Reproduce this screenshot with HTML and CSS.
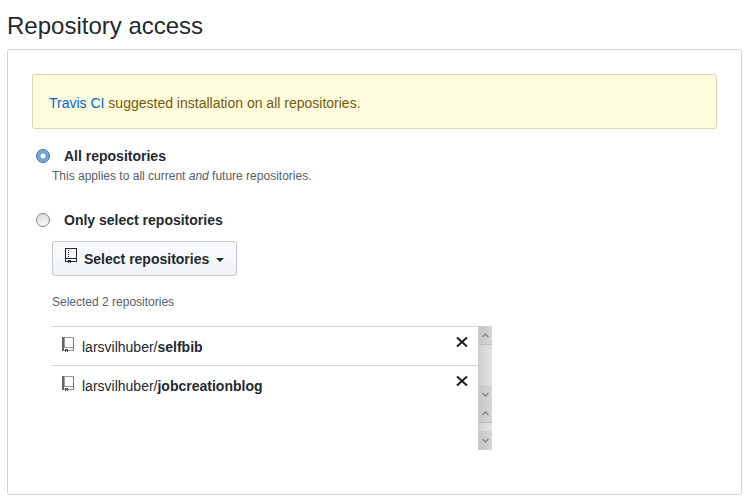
FILE: index.html
```
<!DOCTYPE html>
<html lang="en">
<head>
<meta charset="utf-8">
<title>Repository access</title>
<link rel="stylesheet" href="styles.css">
</head>
<body>
<svg class="defs" aria-hidden="true">
  <symbol id="repo" viewBox="0 0 12 16" shape-rendering="crispEdges">
    <path fill="currentColor" d="M0 0h12v1H0zM0 1h1v13H0zM11 1h1v13h-1zM1 10h10v1H1zM1 13h2v1H1zM6 13h5v1H6z"/>
    <path fill="currentColor" d="M3 2h1v1H3zM3 4h1v1H3zM3 6h1v1H3zM3 8h1v1H3zM3 12h3v2H3zM3 14h1v1H3zM5 14h1v1H5z"/>
  </symbol>
  <symbol id="book" viewBox="0 0 12 16" shape-rendering="crispEdges">
    <path fill="#666" d="M0 0h2v14H0z"/>
    <path fill="#999" d="M2 0h10v1H2zM2 1h1v10H2zM2 10h9v1H2zM6 13h6v1H6zM2 13h1v1H2z"/>
    <path fill="#777" d="M11 1h1v13h-1z"/>
    <path fill="#555" d="M3 12h3v2H3zM3 14h1v1H3zM5 14h1v1H5z"/>
  </symbol>
  <symbol id="cross" viewBox="0 0 12 12">
    <path fill="none" stroke="currentColor" stroke-width="2" d="M1 1.500l10 9M11 1.500l-10 9"/>
  </symbol>
  <symbol id="up" viewBox="0 0 7 5">
    <path fill="none" stroke="#888" stroke-width="1.500" d="M.5 4l3-3 3 3"/>
  </symbol>
  <symbol id="down" viewBox="0 0 7 5">
    <path fill="none" stroke="#888" stroke-width="1.500" d="M.5 1l3 3 3-3"/>
  </symbol>
</svg>
<main>
  <h1>Repository access</h1>
  <form class="panel">
    <p class="notice"><a href="#">Travis CI</a> suggested installation on all repositories.</p>
    <div class="choice">
      <input type="radio" name="access" id="all" checked>
      <label for="all">All repositories</label>
    </div>
    <p class="note">This applies to all current <em>and</em> future repositories.</p>
    <div class="choice">
      <input type="radio" name="access" id="selected">
      <label for="selected">Only select repositories</label>
    </div>
    <div class="selection">
      <button type="button" class="picker"><svg class="icon" aria-hidden="true"><use href="#repo"/></svg><span>Select repositories</span><i class="caret"></i></button>
      <p class="count">Selected 2 repositories</p>
      <div class="viewport">
        <ul class="repos">
          <li><svg class="icon" aria-hidden="true"><use href="#book"/></svg><span>larsvilhuber/<b>selfbib</b></span><button type="button" class="remove" aria-label="Remove selfbib"><svg aria-hidden="true"><use href="#cross"/></svg></button></li>
          <li><svg class="icon" aria-hidden="true"><use href="#book"/></svg><span>larsvilhuber/<b>jobcreationblog</b></span><button type="button" class="remove" aria-label="Remove jobcreationblog"><svg aria-hidden="true"><use href="#cross"/></svg></button></li>
        </ul>
        <div class="bars" aria-hidden="true">
          <div class="bar tall"><span><svg><use href="#up"/></svg></span><span><svg><use href="#down"/></svg></span></div>
          <div class="bar"><span><svg><use href="#up"/></svg></span><span><svg><use href="#down"/></svg></span></div>
        </div>
      </div>
    </div>
  </form>
</main>
</body>
</html>
```
FILE: styles.css
```
* { box-sizing: border-box; }
body {
  margin: 0;
  background: #fff;
  color: #24292e;
  font: 14px/20px "Liberation Sans", Arial, sans-serif;
}
.defs { position: absolute; width: 0; height: 0; }
main { padding: 8px 4px 8px 7px; }
h1 { margin: 0 0 5px; font-size: 24px; line-height: 36px; font-weight: 400; }
.panel {
  padding: 24px 24px 44px;
  border: 1px solid #d1d2d4;
  border-radius: 3px;
}
.notice {
  margin: 0 0 17px;
  padding: 19px 16px 16px;
  line-height: 18px;
  border: 1px solid #dad5b4;
  border-radius: 3px;
  background: #fffbdd;
  color: #735c0f;
}
a { color: #0366d6; text-decoration: none; }
.choice { display: flex; align-items: center; gap: 14px; height: 20px; padding-left: 4px; }
.choice label { font-weight: 700; }
input[type="radio"] {
  appearance: none;
  width: 14px;
  height: 14px;
  margin: 0;
  border: 1px solid #858585;
  border-radius: 50%;
  background: linear-gradient(#dcdcdc, #f8f8f8);
}
input[type="radio"]:checked {
  border-color: #38669b;
  background: radial-gradient(circle, #fff 0 2px, #6c9fd6 3px, #87b4e4 7px);
}
.note, .count { margin: 0; font-size: 12px; color: #586069; }
.note { padding-left: 20px; margin-bottom: 24px; }
.selection { margin-left: 20px; }
.picker {
  display: flex;
  align-items: center;
  height: 35px;
  min-width: 185px;
  margin: 11px 0 16px;
  padding: 0 12px;
  border: 1px solid #c5c9cd;
  border-radius: 3px;
  background: linear-gradient(#fafbfc, #eff3f6);
  color: inherit;
  font: 700 14px/20px "Liberation Sans", Arial, sans-serif;
}
.icon { width: 12px; height: 16px; margin-right: 7px; flex: none; }
.picker .icon { margin-bottom: 5px; }
.caret { margin: 3px 0 0 auto; border: 4px solid transparent; border-top-color: currentColor; border-bottom: 0; }
.viewport { display: flex; width: 440px; max-width: 100%; margin-top: 14px; }
.repos { flex: 1; list-style: none; margin: 0; padding: 0; }
.repos li { display: flex; align-items: center; height: 39px; padding: 2px 10px 0; border-top: 1px solid #d1d5da; }
.repos .icon { margin: 0 8px 4px 0; }
.remove { margin: 0 0 10px auto; padding: 0; border: 0; background: none; color: #1b1f23; }
.remove svg { display: block; width: 12px; height: 12px; }
.bars { width: 14px; }
.bar {
  display: flex;
  flex-direction: column;
  justify-content: space-between;
  height: 46px;
  border-left: 1px solid #ccc;
  background: linear-gradient(90deg, #d2d2d2, #e2e2e2);
}
.tall { height: 78px; }
.bar span { display: flex; align-items: center; justify-content: center; height: 19px; background: linear-gradient(90deg, #c6c6c6, #d6d6d6); }
.bar span:first-child { border-bottom: 1px solid #bbb; }
.bar svg { width: 7px; height: 5px; }
```
